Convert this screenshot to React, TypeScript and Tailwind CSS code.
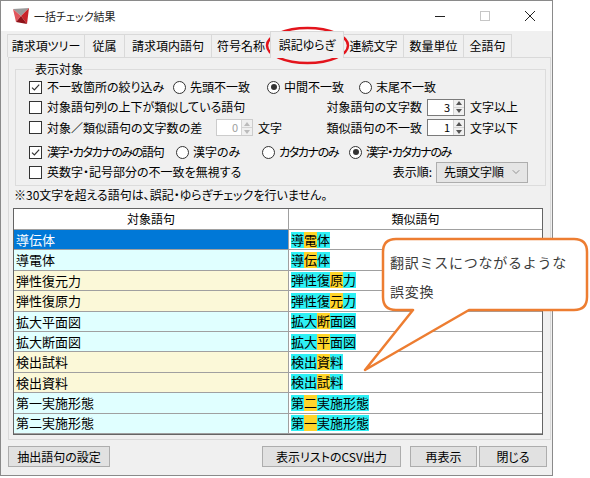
import React from "react";
import { ChevronDown } from "lucide-react";

const font = "font-['Noto_Sans_CJK_JP','Noto_Sans_CJK_SC',sans-serif] [font-feature-settings:'palt']";

type Row = { a: string; b: string; d: number; tone: "cyan" | "yellow"; sel?: boolean };

const rows: Row[] = [
	{ a: "導伝体", b: "導電体", d: 1, tone: "cyan", sel: true },
	{ a: "導電体", b: "導伝体", d: 1, tone: "cyan" },
	{ a: "弾性復元力", b: "弾性復原力", d: 3, tone: "yellow" },
	{ a: "弾性復原力", b: "弾性復元力", d: 3, tone: "yellow" },
	{ a: "拡大平面図", b: "拡大断面図", d: 2, tone: "cyan" },
	{ a: "拡大断面図", b: "拡大平面図", d: 2, tone: "cyan" },
	{ a: "検出試料", b: "検出資料", d: 2, tone: "yellow" },
	{ a: "検出資料", b: "検出試料", d: 2, tone: "yellow" },
	{ a: "第一実施形態", b: "第二実施形態", d: 1, tone: "cyan" },
	{ a: "第二実施形態", b: "第一実施形態", d: 1, tone: "cyan" },
];

const tabs = [
	{ label: "請求項ツリー", w: "w-[78px]" },
	{ label: "従属", w: "w-[41px]" },
	{ label: "請求項内語句", w: "w-[88px]" },
	{ label: "符号名称", w: "w-[60px]" },
	{ label: "誤記ゆらぎ", w: "w-[74px]", active: true },
	{ label: "連続文字", w: "w-[61px]" },
	{ label: "数量単位", w: "w-[61px]" },
	{ label: "全語句", w: "w-[49px]" },
];

function Check({ checked }: { checked?: boolean }) {
	return (
		<span className="flex h-[13px] w-[13px] shrink-0 items-center justify-center border border-[#333] bg-white">
			{checked && (
				<svg width="11" height="11" viewBox="0 0 11 11">
					<path d="M2 5.6 L4.4 8 L9.2 2.6" stroke="#333" strokeWidth="1.2" fill="none" />
				</svg>
			)}
		</span>
	);
}

function Radio({ checked }: { checked?: boolean }) {
	return (
		<span className="flex h-[13px] w-[13px] shrink-0 items-center justify-center rounded-full border border-[#333] bg-white">
			{checked && <span className="h-[6px] w-[6px] rounded-full bg-[#333]" />}
		</span>
	);
}

function CheckItem({ label, checked, w, tight }: { label: string; checked?: boolean; w: string; tight?: boolean }) {
	return (
		<div className={`flex items-center gap-[5px] ${w}`}>
			<Check checked={checked} />
			<span className={`whitespace-nowrap ${tight ? "tracking-[-1.4px]" : ""}`}>{label}</span>
		</div>
	);
}

function RadioItem({ label, checked, w, tight }: { label: string; checked?: boolean; w?: string; tight?: boolean }) {
	return (
		<div className={`flex items-center gap-[4px] ${w ?? ""}`}>
			<Radio checked={checked} />
			<span className={`whitespace-nowrap ${tight ? "tracking-[-1.4px]" : ""}`}>{label}</span>
		</div>
	);
}

function Spinner({ value, disabled, w }: { value: string; disabled?: boolean; w: string }) {
	return (
		<div
			className={`flex h-[17px] ${w} border bg-white ${disabled ? "border-[#cccccc] text-[#a0a0a0]" : "border-[#7a7a7a] text-black"}`}
		>
			<span className="flex-1 pr-[3px] text-right text-[11px] leading-[15px]">{value}</span>
			<div className="flex w-[11px] flex-col border-l border-[#d4d4d4] bg-[#f0f0f0]">
				<div className="flex flex-1 items-center justify-center border-b border-[#d4d4d4]">
					<svg width="6" height="4" viewBox="0 0 6 4">
						<path d="M0 4 L3 0 L6 4 Z" fill={disabled ? "#bbb" : "#555"} />
					</svg>
				</div>
				<div className="flex flex-1 items-center justify-center">
					<svg width="6" height="4" viewBox="0 0 6 4">
						<path d="M0 0 L3 4 L6 0 Z" fill={disabled ? "#bbb" : "#555"} />
					</svg>
				</div>
			</div>
		</div>
	);
}

function Similar({ text, d }: { text: string; d: number }) {
	return (
		<span className="flex leading-[16px]">
			{text.split("").map((c, i) => (
				<span key={i} className={i === d ? "bg-[#ffd42a]" : "bg-[#2ef0f4]"}>
					{c}
				</span>
			))}
		</span>
	);
}

function Button({ label, w, ml }: { label: string; w: string; ml: string }) {
	return (
		<div
			className={`flex h-[21px] ${w} ${ml} items-center justify-center border border-[#adadad] bg-[#e1e1e1] text-[12px]`}
		>
			{label}
		</div>
	);
}

export default function App() {
	return (
		<div className={`relative h-[478px] w-[590px] overflow-hidden bg-white text-black ${font}`}>
			<div className="flex h-[476px] w-[553px] flex-col border border-[#8a8a8a] bg-[#f0f0f0]">
				{/* title bar */}
				<div className="flex h-[30px] shrink-0 items-center bg-white">
					<svg className="ml-[11px]" width="18" height="18" viewBox="0 0 18 18">
						<polygon points="1,2 17,1 9,9" fill="#9a9a9a" />
						<polygon points="17,1 9,9 15,17" fill="#c8242b" />
						<polygon points="1,2 9,9 4,15" fill="#e0565c" />
						<polygon points="9,9 15,17 4,15" fill="#8e1118" />
					</svg>
					<span className="ml-[4px] text-[11px] text-[#222]">一括チェック結果</span>
					<div className="ml-auto flex items-center">
						<svg width="12" height="12" viewBox="0 0 12 12" className="mr-[33px]">
							<line x1="1" y1="6.5" x2="11" y2="6.5" stroke="#222" strokeWidth="1" />
						</svg>
						<svg width="12" height="12" viewBox="0 0 12 12" className="mr-[33px]">
							<rect x="1.5" y="1.5" width="9" height="9" fill="none" stroke="#c6c6c6" strokeWidth="1" />
						</svg>
						<svg width="12" height="12" viewBox="0 0 12 12" className="mr-[16px]">
							<path d="M1 1 L11 11 M11 1 L1 11" stroke="#222" strokeWidth="1" />
						</svg>
					</div>
				</div>

				{/* tabs */}
				<div className="flex h-[26px] shrink-0 items-end pl-[7px]">
					{tabs.map((t) =>
						t.active ? (
							<div
								key={t.label}
								className={`relative z-10 -mb-px -ml-px flex h-[27px] ${t.w} items-center justify-center border border-b-0 border-[#d9d9d9] bg-[#f0f0f0] text-[12px]`}
							>
								{t.label}
							</div>
						) : (
							<div
								key={t.label}
								className={`-ml-px flex h-[23px] ${t.w} items-center justify-center border border-b-0 border-[#d9d9d9] bg-[#f0f0f0] text-[12px]`}
							>
								{t.label}
							</div>
						),
					)}
				</div>

				{/* tab panel */}
				<div className="ml-[7px] flex h-[383px] w-[543px] shrink-0 flex-col border border-[#d9d9d9] bg-[#f0f0f0] text-[12px]">
					<fieldset className="ml-[6px] mt-[3px] w-[531px] border border-[#dcdcdc] pb-[3px] pl-[13px]">
						<legend className="ml-[5px] px-[1px] leading-[16px]">表示対象</legend>
						<div className="flex h-[20px] items-center">
							<CheckItem label="不一致箇所の絞り込み" checked w="w-[144px]" />
							<RadioItem label="先頭不一致" w="w-[94px]" />
							<RadioItem label="中間不一致" checked w="w-[92px]" />
							<RadioItem label="末尾不一致" />
						</div>
						<div className="flex h-[20px] items-center">
							<CheckItem label="対象語句列の上下が類似している語句" w="w-[291px]" />
							<span className="w-[102px] text-right">対象語句の文字数</span>
							<div className="ml-[5px]">
								<Spinner value="3" w="w-[38px]" />
							</div>
							<span className="ml-[5px]">文字以上</span>
						</div>
						<div className="flex h-[21px] items-center">
							<CheckItem label="対象／類似語句の文字数の差" w="w-[187px]" />
							<Spinner value="0" disabled w="w-[37px]" />
							<span className="w-[67px] pl-[5px]">文字</span>
							<span className="w-[102px] text-right">類似語句の不一致</span>
							<div className="ml-[5px]">
								<Spinner value="1" w="w-[38px]" />
							</div>
							<span className="ml-[5px]">文字以下</span>
						</div>
						<div className="mt-[4px] flex h-[20px] items-center">
							<CheckItem label="漢字・カタカナのみの語句" checked tight w="w-[147px]" />
							<RadioItem label="漢字のみ" w="w-[86px]" />
							<RadioItem label="カタカナのみ" tight w="w-[87px]" />
							<RadioItem label="漢字・カタカナのみ" checked tight />
						</div>
						<div className="flex h-[20px] items-center">
							<CheckItem label="英数字・記号部分の不一致を無視する" w="w-[354px]" />
							<span className="w-[49px] text-right">表示順:</span>
							<div className="ml-[4px] flex h-[21px] w-[92px] items-center justify-between border border-[#adadad] bg-[#e5e5e5] pl-[7px] pr-[5px]">
								<span>先頭文字順</span>
								<ChevronDown size={12} strokeWidth={1.5} color="#777" />
							</div>
						</div>
					</fieldset>

					<div className="ml-[5px] mt-[1px] leading-[16px]">
						※30文字を超える語句は、誤記・ゆらぎチェックを行いません。
					</div>

					{/* result grid */}
					<div className="ml-[4px] mt-[5px] flex w-[530px] flex-col border border-[#646464] bg-white">
						<div className="flex h-[21px] border-b border-[#a0a0a0]">
							<div className="flex w-[275px] items-center justify-center border-r border-[#a0a0a0]">対象語句</div>
							<div className="flex flex-1 items-center justify-center">類似語句</div>
						</div>
						{rows.map((r, i) => (
							<div key={i} className="flex h-[20.4px] border-b border-[#a0a0a0] text-[13px]">
								<div
									className={`flex w-[275px] items-center border-r border-[#a0a0a0] pl-[2px] ${
										r.sel
											? "bg-[#0078d7] text-white"
											: r.tone === "cyan"
												? "bg-[#e0ffff]"
												: "bg-[#fbf8d8]"
									}`}
								>
									{r.a}
								</div>
								<div className="flex flex-1 items-center pl-[2px]">
									<Similar text={r.b} d={r.d} />
								</div>
							</div>
						))}
					</div>
				</div>

				{/* buttons */}
				<div className="mt-[6px] flex">
					<Button label="抽出語句の設定" w="w-[102px]" ml="ml-[7px]" />
					<Button label="表示リストのCSV出力" w="w-[139px]" ml="ml-[152px]" />
					<Button label="再表示" w="w-[67px]" ml="ml-[9px]" />
					<Button label="閉じる" w="w-[68px]" ml="ml-[2px]" />
				</div>
			</div>

			{/* annotations drawn over the screenshot */}
			<svg className="pointer-events-none absolute left-0 top-0" width="590" height="478" viewBox="0 0 590 478">
				<ellipse cx="307.5" cy="45.5" rx="40.5" ry="17.5" fill="none" stroke="#e3141c" strokeWidth="2.5" />
				<path
					d="M396 239 H574 Q587 239 587 252 V297 Q587 310 574 310 H469 L365 370 L413 310 H396 Q383 310 383 297 V252 Q383 239 396 239 Z"
					fill="#ffffff"
					stroke="#ed7d31"
					strokeWidth="2.5"
					strokeLinejoin="round"
				/>
			</svg>
			<div className="absolute left-[390px] top-[248px] text-[14px] leading-[29px] tracking-[0.75px] text-[#3b3b3b] [font-feature-settings:normal]">
				<div>翻訳ミスにつながるような</div>
				<div>誤変換</div>
			</div>
		</div>
	);
}
